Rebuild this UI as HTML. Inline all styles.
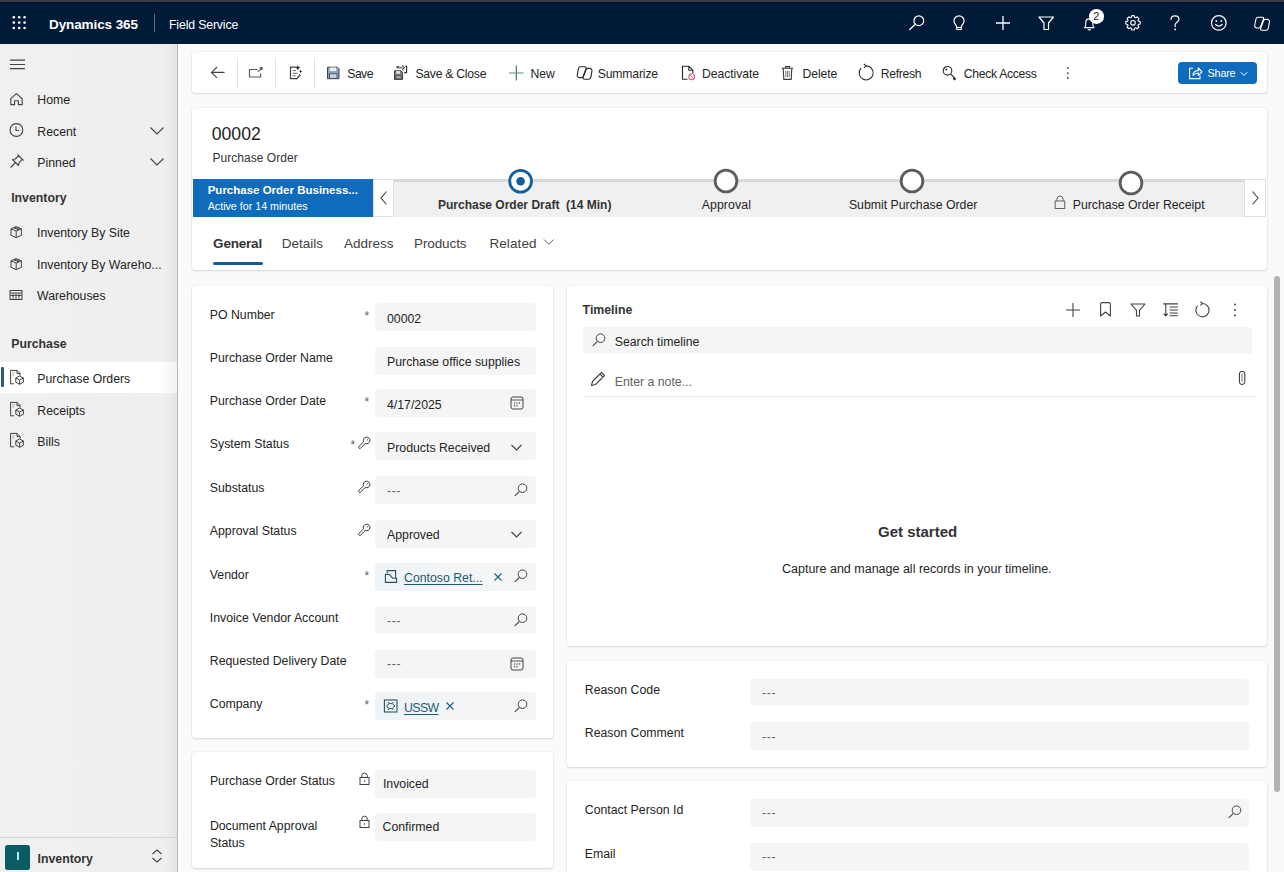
<!DOCTYPE html><html><head><meta charset="utf-8"><style>
html,body{margin:0;padding:0;}
body{width:1284px;height:872px;overflow:hidden;position:relative;background:#fafafa;font-family:"Liberation Sans", sans-serif;}
.t{position:absolute;line-height:1;white-space:nowrap;}
.card{position:absolute;background:#fff;border-radius:3px;box-shadow:0 0 1.5px rgba(0,0,0,.14),0 1px 2px rgba(0,0,0,.12);}
svg{overflow:visible}
</style></head><body><div style="position:absolute;left:0px;top:0px;width:1284px;height:2px;background:#373b4b"></div>
<div style="position:absolute;left:0px;top:2px;width:1284px;height:42px;background:#001a38"></div>
<div style="position:absolute;left:0px;top:2px;width:1284px;height:1px;background:#0a1428"></div>
<svg style="position:absolute;left:0;top:0" width="40" height="44"><circle cx="13.8" cy="17.2" r="1.3" fill="#fff"/><circle cx="13.8" cy="22.6" r="1.3" fill="#fff"/><circle cx="13.8" cy="28.0" r="1.3" fill="#fff"/><circle cx="19.2" cy="17.2" r="1.3" fill="#fff"/><circle cx="19.2" cy="22.6" r="1.3" fill="#fff"/><circle cx="19.2" cy="28.0" r="1.3" fill="#fff"/><circle cx="24.6" cy="17.2" r="1.3" fill="#fff"/><circle cx="24.6" cy="22.6" r="1.3" fill="#fff"/><circle cx="24.6" cy="28.0" r="1.3" fill="#fff"/></svg>
<div class="t" style="left:49px;top:17.87px;font-size:13.5px;font-weight:700;color:#fff;letter-spacing:-0.1px">Dynamics 365</div>
<div style="position:absolute;left:154px;top:14px;width:1px;height:18px;background:#5a6a8a"></div>
<div class="t" style="left:169px;top:18.89px;font-size:12.3px;font-weight:400;color:#fff;letter-spacing:-0.15px">Field Service</div>
<svg style="position:absolute;left:905px;top:10px;" width="26" height="26" viewBox="0 0 26 26" fill="none"><circle cx="13.8" cy="10.7" r="4.9" stroke="#fff" stroke-width="1.2"/><path d="M10.3 14.2 L4.7 19.5" stroke="#fff" stroke-width="1.3" stroke-linecap="round"/></svg>
<svg style="position:absolute;left:946px;top:10px;transform:translate(-2px,0)" width="26" height="26" viewBox="0 0 26 26" fill="none"><path d="M12.8 19.5 v-2.2 c0-1.2-0.6-2-1.4-3 a5 5 0 1 1 7.2 0 c-0.8 1-1.4 1.8-1.4 3 v2.2 z" stroke="#fff" stroke-width="1.2"/><path d="M13 17.5 h4" stroke="#fff" stroke-width="1.1"/></svg>
<svg style="position:absolute;left:990px;top:10px;" width="26" height="26" viewBox="0 0 26 26" fill="none"><path d="M13 6 v14 M6 13 h14" stroke="#fff" stroke-width="1.3"/></svg>
<svg style="position:absolute;left:1033px;top:10px;" width="26" height="26" viewBox="0 0 26 26" fill="none"><path d="M6 7 h14.5 l-5 6 v6.5 h-4.5 v-6.5 z" stroke="#fff" stroke-width="1.2" stroke-linejoin="round"/></svg>
<svg style="position:absolute;left:1076px;top:10px;" width="26" height="26" viewBox="0 0 26 26" fill="none"><path d="M8.6 17.6 c0.9-0.9 1.2-2 1.2-3.6 v-1.6 a3.5 3.5 0 0 1 7 0 v1.6 c0 1.6 0.3 2.7 1.2 3.6 z" stroke="#fff" stroke-width="1.1" stroke-linejoin="round"/><path d="M12 19 a1.4 1.4 0 0 0 2.6 0" stroke="#fff" stroke-width="1.1"/></svg>
<div style="position:absolute;left:1089.3px;top:9.1px;width:14.6px;height:14.6px;border-radius:50%;background:#fff;"></div>
<div class="t" style="left:1093.3px;top:10.59px;font-size:11px;font-weight:400;color:#2a1a1a;">2</div>
<svg style="position:absolute;left:1119.5px;top:10px;" width="26" height="26" viewBox="0 0 26 26" fill="none"><path d="M11.35 7.45 L11.76 5.61 L14.24 5.61 L14.65 7.45 L15.61 7.85 L17.21 6.84 L18.96 8.59 L17.95 10.19 L18.35 11.15 L20.19 11.56 L20.19 14.04 L18.35 14.45 L17.95 15.41 L18.96 17.01 L17.21 18.76 L15.61 17.75 L14.65 18.15 L14.24 19.99 L11.76 19.99 L11.35 18.15 L10.39 17.75 L8.79 18.76 L7.04 17.01 L8.05 15.41 L7.65 14.45 L5.81 14.04 L5.81 11.56 L7.65 11.15 L8.05 10.19 L7.04 8.59 L8.79 6.84 L10.39 7.85 Z" stroke="#fff" stroke-width="1.1" stroke-linejoin="round"/><circle cx="13" cy="12.8" r="2.3" stroke="#fff" stroke-width="1.1"/></svg>
<svg style="position:absolute;left:1165px;top:10px;" width="20" height="22" viewBox="0 0 20 22" fill="none"><path d="M6 9.5 C6 6.5 8 5.8 10 5.8 C12.2 5.8 14 7 14 9.3 C14 11.5 11.8 12.2 10.6 13.5 C10.2 14 10.1 14.6 10.1 16.6" stroke="#fff" stroke-width="1.2" stroke-linecap="round"/><circle cx="10.1" cy="19.4" r="0.9" fill="#fff"/></svg>
<svg style="position:absolute;left:1206px;top:10px;" width="26" height="26" viewBox="0 0 26 26" fill="none"><circle cx="12.8" cy="12.9" r="7.3" stroke="#fff" stroke-width="1.2"/><circle cx="10.3" cy="11" r="0.9" fill="#fff"/><circle cx="15.3" cy="11" r="0.9" fill="#fff"/><path d="M9.5 14.5 q3.3 3.2 6.6 0" stroke="#fff" stroke-width="1.2" stroke-linecap="round"/></svg>
<svg style="position:absolute;left:1249px;top:10px;" width="26" height="26" viewBox="0 0 26 26" fill="none"><path d="M8.8 7.2 H13.4 C14.4 7.2 14.9 7.9 14.6 8.8 L11.6 16.8 C11.3 17.6 10.7 18 9.9 18 H8.1 C6.3 18 5.4 16.8 5.8 15 L6.8 9.6 C7.1 8.1 7.8 7.2 8.8 7.2 Z" stroke="#fff" stroke-width="1.1"/><path d="M17.4 20.2 H12.8 C11.8 20.2 11.3 19.5 11.6 18.6 L14.6 10.6 C14.9 9.8 15.5 9.4 16.3 9.4 H18.1 C19.9 9.4 20.8 10.6 20.4 12.4 L19.4 17.8 C19.1 19.3 18.4 20.2 17.4 20.2 Z" stroke="#fff" stroke-width="1.1"/></svg>
<div style="position:absolute;left:0px;top:44px;width:177px;height:828px;background:linear-gradient(to right,#f0f0f0 0,#efefef 165px,#e3e3e3 177px)"></div>
<div style="position:absolute;left:177px;top:44px;width:1px;height:828px;background:#bababa"></div>
<div style="position:absolute;left:178px;top:44px;width:5px;height:828px;background:#fdfdfd"></div>
<svg style="position:absolute;left:9px;top:56px;" width="20" height="16" viewBox="0 0 20 16" fill="none"><path d="M1 4.1 h15 M1 8.5 h15 M1 12.6 h15" stroke="#424242" stroke-width="1.1"/></svg>
<svg style="position:absolute;left:9px;top:92px;" width="16" height="16" viewBox="0 0 16 16" fill="none"><path d="M1.8 6.6 L7.5 1.6 L13.2 6.6 V12.6 H9.4 V8.8 H5.6 V12.6 H1.8 Z" stroke="#424242" stroke-width="1.1" stroke-linejoin="round"/></svg>
<div class="t" style="left:37.3px;top:94.49px;font-size:12.3px;font-weight:400;color:#242424;">Home</div>
<svg style="position:absolute;left:9px;top:122px;" width="16" height="16" viewBox="0 0 16 16" fill="none"><circle cx="7.4" cy="8" r="6.4" stroke="#424242" stroke-width="1.1"/><path d="M7 4.5 V8.5 H10" stroke="#424242" stroke-width="1.1"/></svg>
<div class="t" style="left:37.3px;top:126.19px;font-size:12.3px;font-weight:400;color:#242424;">Recent</div>
<svg style="position:absolute;left:148px;top:124px;" width="18" height="12" viewBox="0 0 18 12" fill="none"><path d="M2.5 3.5 L9 10 L15.5 3.5" stroke="#424242" stroke-width="1.1"/></svg>
<svg style="position:absolute;left:9px;top:153px;" width="16" height="16" viewBox="0 0 16 16" fill="none"><path d="M8.5 1.5 L14.5 7.5 M10 2.5 L6.2 6 L3.5 6.5 L9.5 12.5 L10 9.8 L13.5 6 M6.5 9.5 L1.5 14.5" stroke="#424242" stroke-width="1.1" stroke-linejoin="round"/></svg>
<div class="t" style="left:37.3px;top:156.79px;font-size:12.3px;font-weight:400;color:#242424;">Pinned</div>
<svg style="position:absolute;left:148px;top:155px;" width="18" height="12" viewBox="0 0 18 12" fill="none"><path d="M2.5 3.5 L9 10 L15.5 3.5" stroke="#424242" stroke-width="1.1"/></svg>
<div class="t" style="left:11.2px;top:192.09px;font-size:12.3px;font-weight:700;color:#333;">Inventory</div>
<svg style="position:absolute;left:9.5px;top:226px;" width="13" height="13" viewBox="0 0 13 13" fill="none"><path d="M6.2 0.6 L11.4 2.8 V9.3 L6.2 11.6 L1 9.3 V2.8 Z M1 2.8 L6.2 5 L11.4 2.8 M6.2 5 V11.6 M3.6 1.7 L8.8 3.9 M4.9 1.15 L10.1 3.35" stroke="#424242" stroke-width="1" stroke-linejoin="round"/></svg>
<div class="t" style="left:37px;top:227.19px;font-size:12.3px;font-weight:400;color:#242424;">Inventory By Site</div>
<svg style="position:absolute;left:9.5px;top:258px;" width="13" height="13" viewBox="0 0 13 13" fill="none"><path d="M6.2 0.6 L11.4 2.8 V9.3 L6.2 11.6 L1 9.3 V2.8 Z M1 2.8 L6.2 5 L11.4 2.8 M6.2 5 V11.6 M3.6 1.7 L8.8 3.9 M4.9 1.15 L10.1 3.35" stroke="#424242" stroke-width="1" stroke-linejoin="round"/></svg>
<div class="t" style="left:37px;top:259.19px;font-size:12.3px;font-weight:400;color:#242424;">Inventory By Wareho...</div>
<svg style="position:absolute;left:9px;top:289px;" width="14" height="12" viewBox="0 0 14 12" fill="none"><rect x="1" y="1.5" width="12" height="9" stroke="#424242" stroke-width="1"/><path d="M1 4 h12 M1 6.5 h12 M4 4 v6.5 M7 4 v6.5 M10 4 v6.5" stroke="#424242" stroke-width="0.9"/></svg>
<div class="t" style="left:37px;top:289.79px;font-size:12.3px;font-weight:400;color:#242424;">Warehouses</div>
<div class="t" style="left:11.2px;top:338.09px;font-size:12.3px;font-weight:700;color:#333;">Purchase</div>
<div style="position:absolute;left:0px;top:362px;width:177px;height:31px;background:linear-gradient(to right,#fff 0,#fff 160px,#f2f2f2 177px)"></div>
<div style="position:absolute;left:1px;top:367px;width:3px;height:20px;background:#2a5b84;border-radius:1px"></div>
<svg style="position:absolute;left:8.6px;top:369.4px;" width="16" height="16" viewBox="0 0 16 16" fill="none"><path d="M8 1.4 H1.6 V14.8 H5.2 M8 1.4 L11.2 4.6 V6.4 M8 1.4 V4.6 H11.2" stroke="#424242" stroke-width="1" stroke-linejoin="round"/><path d="M3.4 4 H5.6 M3.4 6 H5" stroke="#9a9a9a" stroke-width="0.9"/><path d="M10.6 6.9 L14.4 9 V13.2 L10.6 15.3 L6.8 13.2 V9 Z M6.8 9 L10.6 11.1 L14.4 9 M10.6 11.1 V15.3" fill="#fff" fill-opacity="0" stroke="#424242" stroke-width="1" stroke-linejoin="round"/></svg>
<div class="t" style="left:37.3px;top:373.09px;font-size:12.3px;font-weight:400;color:#242424;">Purchase Orders</div>
<svg style="position:absolute;left:8.6px;top:401px;" width="16" height="16" viewBox="0 0 16 16" fill="none"><path d="M8 1.4 H1.6 V14.8 H5.2 M8 1.4 L11.2 4.6 V6.4 M8 1.4 V4.6 H11.2" stroke="#424242" stroke-width="1" stroke-linejoin="round"/><path d="M3.4 4 H5.6 M3.4 6 H5" stroke="#9a9a9a" stroke-width="0.9"/><path d="M10.6 6.9 L14.4 9 V13.2 L10.6 15.3 L6.8 13.2 V9 Z M6.8 9 L10.6 11.1 L14.4 9 M10.6 11.1 V15.3" fill="#fff" fill-opacity="0" stroke="#424242" stroke-width="1" stroke-linejoin="round"/></svg>
<div class="t" style="left:37.3px;top:404.89px;font-size:12.3px;font-weight:400;color:#242424;">Receipts</div>
<svg style="position:absolute;left:8.6px;top:432.4px;" width="16" height="16" viewBox="0 0 16 16" fill="none"><path d="M8 1.4 H1.6 V14.8 H5.2 M8 1.4 L11.2 4.6 V6.4 M8 1.4 V4.6 H11.2" stroke="#424242" stroke-width="1" stroke-linejoin="round"/><path d="M3.4 4 H5.6 M3.4 6 H5" stroke="#9a9a9a" stroke-width="0.9"/><path d="M10.6 6.9 L14.4 9 V13.2 L10.6 15.3 L6.8 13.2 V9 Z M6.8 9 L10.6 11.1 L14.4 9 M10.6 11.1 V15.3" fill="#fff" fill-opacity="0" stroke="#424242" stroke-width="1" stroke-linejoin="round"/></svg>
<div class="t" style="left:37.3px;top:436.09px;font-size:12.3px;font-weight:400;color:#242424;">Bills</div>
<div style="position:absolute;left:0px;top:837px;width:177px;height:1px;background:#d4d4d4"></div>
<div style="position:absolute;left:5px;top:845px;width:25px;height:25px;border-radius:2.5px;background:#0a5b65"></div>
<div style="position:absolute;left:17px;top:852px;width:2px;height:8px;background:#a6f2f5"></div>
<div class="t" style="left:37.6px;top:853.39px;font-size:12.3px;font-weight:700;color:#333;">Inventory</div>
<svg style="position:absolute;left:150px;top:848px;" width="14" height="16" viewBox="0 0 14 16" fill="none"><path d="M2.5 6 L7 2 L11.5 6 M2.5 10 L7 14 L11.5 10" stroke="#424242" stroke-width="1.1"/></svg>
<div class="card" style="left:192px;top:52px;width:1075px;height:41px"></div>
<svg style="position:absolute;left:208px;top:64px;" width="20" height="16" viewBox="0 0 20 16" fill="none"><path d="M3.6 8.4 H16.6 M9 3 L3.5 8.4 L9 13.8" stroke="#424242" stroke-width="1.1"/></svg>
<div style="position:absolute;left:237px;top:58px;width:1px;height:30px;background:#e3e3e3"></div>
<svg style="position:absolute;left:247px;top:64px;" width="18" height="16" viewBox="0 0 18 16" fill="none"><path d="M10.5 5.5 H2.5 V13 H13.6 V9.5" stroke="#5a5a5a" stroke-width="1.2"/><path d="M10.8 7.8 L14.2 4.8" stroke="#5a5a5a" stroke-width="1.1"/><path d="M12.2 3.6 L15.8 3 L15.2 6.6 Z" fill="#424242"/></svg>
<div style="position:absolute;left:275px;top:58px;width:1px;height:30px;background:#e3e3e3"></div>
<svg style="position:absolute;left:288px;top:64px;" width="18" height="17" viewBox="0 0 18 17" fill="none"><path d="M8.5 3.2 H2.5 V14.6 H9" stroke="#424242" stroke-width="1.2"/><path d="M4.6 6.6 H8 M4.6 9.3 H9.5 M4.6 11.8 H7.5" stroke="#6a6a6a" stroke-width="1"/><path d="M9.8 1 L10.6 3 L12.6 3.8 L10.6 4.6 L9.8 6.6 L9 4.6 L7 3.8 L9 3 Z" fill="#242424"/><path d="M12.6 5.6 L13.1 6.9 L14.4 7.4 L13.1 7.9 L12.6 9.2 L12.1 7.9 L10.8 7.4 L12.1 6.9 Z" fill="#242424"/><path d="M12 10 L8.8 14.4 L8.5 15 L9.2 14.8 L12.6 11" stroke="#424242" stroke-width="1"/></svg>
<div style="position:absolute;left:314px;top:58px;width:1px;height:30px;background:#e3e3e3"></div>
<svg style="position:absolute;left:325px;top:65px;" width="16" height="15" viewBox="0 0 16 15" fill="none"><path d="M2.5 2.2 H12.5 L14 3.7 V13.7 H2.5 Z" fill="#8ea4ba" stroke="#3a4654" stroke-width="1"/><rect x="4.8" y="2.5" width="6.4" height="3.6" fill="#e6f0f6"/><rect x="4.5" y="8.8" width="7.5" height="4.5" fill="#c9d6e2" stroke="#3a4654" stroke-width="0.8"/></svg>
<div class="t" style="left:347.3px;top:68.37px;font-size:12.2px;font-weight:400;color:#242424;letter-spacing:-0.55px">Save</div>
<svg style="position:absolute;left:392px;top:64px;" width="18" height="17" viewBox="0 0 18 17" fill="none"><path d="M2.5 6.8 H9 L10.6 8.4 V15.4 H2.5 Z" fill="#7c7c7c" stroke="#3d3d3d" stroke-width="1"/><rect x="4.3" y="7.1" width="3.6" height="2.6" fill="#e8e8e8"/><rect x="4" y="11.6" width="5" height="3.3" fill="#a8a8a8" stroke="#3d3d3d" stroke-width="0.6"/><path d="M4.2 3.6 H10.5" stroke="#6f8a80" stroke-width="1.8"/><path d="M4.6 2.6 H7" stroke="#2b2b2b" stroke-width="0.9"/><path d="M10 1.4 L12.4 3.7 L10 6" stroke="#555" stroke-width="1.1"/><path d="M13.2 2.2 H14.6 V8.6 H12.2" stroke="#2b2b2b" stroke-width="1.1"/></svg>
<div class="t" style="left:415.4px;top:68.37px;font-size:12.2px;font-weight:400;color:#242424;letter-spacing:-0.25px">Save &amp; Close</div>
<svg style="position:absolute;left:507px;top:64px;" width="18" height="18" viewBox="0 0 18 18" fill="none"><path d="M9.3 1.5 V16.5" stroke="#2f6e63" stroke-width="1.1"/><path d="M2 9 H16.5" stroke="#6b8f88" stroke-width="1.1"/></svg>
<div class="t" style="left:530.4px;top:68.37px;font-size:12.2px;font-weight:400;color:#242424;">New</div>
<svg style="position:absolute;left:575px;top:64px;" width="18" height="17" viewBox="0 0 18 17" fill="none"><path d="M5.3 2.8 H9.9 C10.9 2.8 11.4 3.5 11.1 4.4 L8.1 12.4 C7.8 13.2 7.2 13.6 6.4 13.6 H4.6 C2.8 13.6 1.9 12.4 2.3 10.6 L3.3 5.2 C3.6 3.7 4.3 2.8 5.3 2.8 Z" stroke="#242424" stroke-width="1.1"/><path d="M13.9 15.2 H9.3 C8.3 15.2 7.8 14.5 8.1 13.6 L11.1 5.6 C11.4 4.8 12 4.4 12.8 4.4 H14.6 C16.4 4.4 17.3 5.6 16.9 7.4 L15.9 12.8 C15.6 14.3 14.9 15.2 13.9 15.2 Z" stroke="#242424" stroke-width="1.1"/></svg>
<div class="t" style="left:597.7px;top:68.37px;font-size:12.2px;font-weight:400;color:#242424;letter-spacing:-0.15px">Summarize</div>
<svg style="position:absolute;left:680px;top:64px;" width="18" height="17" viewBox="0 0 18 17" fill="none"><path d="M8.8 2.2 H2.5 V15.3 H7.5 M8.8 2.2 L12.8 6.2 V9 M8.8 2.2 V6.2 H12.8" stroke="#2b2b2b" stroke-width="1.1"/><circle cx="11.7" cy="12.7" r="2.9" fill="#fff" stroke="#d5607a" stroke-width="1.1"/><path d="M9.8 10.8 L13.6 14.6" stroke="#d5607a" stroke-width="1"/></svg>
<div class="t" style="left:702px;top:68.37px;font-size:12.2px;font-weight:400;color:#242424;letter-spacing:-0.05px">Deactivate</div>
<svg style="position:absolute;left:779px;top:64px;" width="18" height="17" viewBox="0 0 18 17" fill="none"><path d="M2.8 4.2 H14.2 M6.5 4.2 V2.6 H10.5 V4.2 M4.2 4.2 L4.8 15.4 H12.2 L12.8 4.2" stroke="#3a3a3a" stroke-width="1.1"/><path d="M6.8 6.8 V13 M8.5 6.8 V13 M10.2 6.8 V13" stroke="#6a6a6a" stroke-width="0.9"/></svg>
<div class="t" style="left:802.5px;top:68.37px;font-size:12.2px;font-weight:400;color:#242424;letter-spacing:-0.1px">Delete</div>
<svg style="position:absolute;left:857px;top:64px;" width="18" height="18" viewBox="0 0 18 18" fill="none"><path d="M9.1 1.9 A7 7 0 1 1 4.1 4.1" stroke="#2b2b2b" stroke-width="1.1"/><path d="M6.9 0 L9.2 1.9 L6.9 3.9" stroke="#2b2b2b" stroke-width="1.1"/></svg>
<div class="t" style="left:880.7px;top:68.37px;font-size:12.2px;font-weight:400;color:#242424;letter-spacing:-0.3px">Refresh</div>
<svg style="position:absolute;left:941px;top:64px;" width="18" height="18" viewBox="0 0 18 18" fill="none"><circle cx="6.5" cy="6.8" r="4.3" stroke="#2b2b2b" stroke-width="1.1"/><circle cx="5.2" cy="5.6" r="1" fill="#2b2b2b"/><path d="M9.5 9.8 L14.5 14.8 L13.6 15.8 L12.2 14.5 M13.2 13.5 L12 14.6" stroke="#2b2b2b" stroke-width="1.1"/></svg>
<div class="t" style="left:963.7px;top:68.37px;font-size:12.2px;font-weight:400;color:#242424;letter-spacing:-0.3px">Check Access</div>
<svg style="position:absolute;left:1064px;top:64px;" width="8" height="18" viewBox="0 0 8 18" fill="none"><circle cx="3.8" cy="3.9" r="0.95" fill="#424242"/><circle cx="3.8" cy="9.1" r="0.95" fill="#424242"/><circle cx="3.8" cy="14" r="0.95" fill="#424242"/></svg>
<div style="position:absolute;left:1178px;top:62px;width:79px;height:21.5px;border-radius:4px;background:#0f6cbd"></div>
<svg style="position:absolute;left:1187px;top:65px;" width="16" height="16" viewBox="0 0 16 16" fill="none"><path d="M6 3.2 H2.6 V13.6 H13 V10.5" stroke="#fff" stroke-width="1.1"/><path d="M6 10.5 C6 6.8 8.3 5.6 11.3 5.6 V3 L15 6.8 L11.3 10.4 V8 C9.2 8 7.4 8.6 6 10.5 Z" stroke="#fff" stroke-width="1.1" stroke-linejoin="round"/></svg>
<div class="t" style="left:1207.6px;top:68.36px;font-size:10.8px;font-weight:400;color:#fff;letter-spacing:-0.2px">Share</div>
<svg style="position:absolute;left:1239px;top:69.7px;" width="10" height="8" viewBox="0 0 10 8" fill="none"><path d="M1.8 2.2 L5 5.4 L8.2 2.2" stroke="#fff" stroke-width="1"/></svg>
<div class="card" style="left:192px;top:108px;width:1075px;height:162px"></div>
<div class="t" style="left:211.7px;top:125.72px;font-size:17.7px;font-weight:400;color:#242424;">00002</div>
<div class="t" style="left:212.4px;top:151.54px;font-size:12px;font-weight:400;color:#333;letter-spacing:0.05px">Purchase Order</div>
<div style="position:absolute;left:394px;top:179px;width:850px;height:38px;background:#f0f0f0"></div>
<div style="position:absolute;left:394px;top:179px;width:850px;height:3px;background:#d9d9d9"></div>
<div style="position:absolute;left:193px;top:179px;width:180px;height:38px;background:#0f6cbd"></div>
<div class="t" style="left:207.7px;top:185.27px;font-size:11.5px;font-weight:700;color:#fff;">Purchase Order Business...</div>
<div class="t" style="left:207.7px;top:200.64px;font-size:10.7px;font-weight:400;color:#fff;">Active for 14 minutes</div>
<div style="position:absolute;left:373px;top:179px;width:21px;height:38px;background:#fff;box-sizing:border-box;border:1px solid #e0e0e0"></div>
<svg style="position:absolute;left:378px;top:190px;" width="12" height="16" viewBox="0 0 12 16" fill="none"><path d="M8.5 1.5 L3 8 L8.5 14.5" stroke="#424242" stroke-width="1.1"/></svg>
<div style="position:absolute;left:1244px;top:179px;width:22px;height:38px;background:#fff;box-sizing:border-box;border:1px solid #e0e0e0"></div>
<svg style="position:absolute;left:1249px;top:190px;" width="12" height="16" viewBox="0 0 12 16" fill="none"><path d="M3.5 1.5 L9 8 L3.5 14.5" stroke="#424242" stroke-width="1.1"/></svg>
<svg style="position:absolute;left:507px;top:168px;" width="28" height="28" viewBox="0 0 28 28" fill="none"><circle cx="13.6" cy="13.3" r="10.9" fill="#fff" stroke="#0f5f9f" stroke-width="2.8"/><circle cx="13.6" cy="13.3" r="4.3" fill="#0f5f9f"/></svg>
<div class="t" style="left:438px;top:199.44px;font-size:12px;font-weight:700;color:#333;">Purchase Order Draft&nbsp; (14 Min)</div>
<svg style="position:absolute;left:712.2px;top:167.4px;" width="28" height="28" viewBox="0 0 28 28" fill="none"><circle cx="14" cy="14" r="10.9" fill="#fff" stroke="#5c5c5c" stroke-width="2.8"/></svg>
<svg style="position:absolute;left:898.4px;top:167.4px;" width="28" height="28" viewBox="0 0 28 28" fill="none"><circle cx="14" cy="14" r="10.9" fill="#fff" stroke="#5c5c5c" stroke-width="2.8"/></svg>
<svg style="position:absolute;left:1116.8px;top:169px;" width="28" height="28" viewBox="0 0 28 28" fill="none"><circle cx="14" cy="14" r="10.9" fill="#fff" stroke="#5c5c5c" stroke-width="2.8"/></svg>
<div class="t" style="left:701.7px;top:199.39px;font-size:12.3px;font-weight:400;color:#242424;letter-spacing:0.1px">Approval</div>
<div class="t" style="left:848.9px;top:199.39px;font-size:12.3px;font-weight:400;color:#242424;">Submit Purchase Order</div>
<svg style="position:absolute;left:1054px;top:195px;" width="12" height="15" viewBox="0 0 12 15" fill="none"><rect x="1.2" y="6" width="9.5" height="7.5" stroke="#616161" stroke-width="1"/><path d="M3 6 V4 a3 3 0 0 1 6 0 V6" stroke="#616161" stroke-width="1"/></svg>
<div class="t" style="left:1072.7px;top:199.39px;font-size:12.3px;font-weight:400;color:#242424;">Purchase Order Receipt</div>
<div class="t" style="left:213.1px;top:237.27px;font-size:13.5px;font-weight:700;color:#333;letter-spacing:-0.2px">General</div>
<div style="position:absolute;left:213px;top:262px;width:50px;height:3px;background:#115ea3;border-radius:2px"></div>
<div class="t" style="left:281.7px;top:237.27px;font-size:13.5px;font-weight:400;color:#424242;">Details</div>
<div class="t" style="left:344px;top:237.27px;font-size:13.5px;font-weight:400;color:#424242;">Address</div>
<div class="t" style="left:414px;top:237.27px;font-size:13.5px;font-weight:400;color:#424242;letter-spacing:-0.1px">Products</div>
<div class="t" style="left:489.4px;top:237.27px;font-size:13.5px;font-weight:400;color:#424242;letter-spacing:0.1px">Related</div>
<svg style="position:absolute;left:542px;top:237px;" width="14" height="10" viewBox="0 0 14 10" fill="none"><path d="M2 2.5 L6.8 7.3 L11.6 2.5" stroke="#616161" stroke-width="1"/></svg>
<div class="card" style="left:192px;top:286px;width:361px;height:452px"></div>
<div class="t" style="left:209.8px;top:309.29px;font-size:12.3px;font-weight:400;color:#242424;">PO Number</div>
<div class="t" style="left:364.5px;top:310.04px;font-size:12px;font-weight:400;color:#616161;">*</div>
<div style="position:absolute;left:375px;top:303px;width:161px;height:28px;background:#f5f5f5;border-radius:4px"></div>
<div class="t" style="left:387px;top:312.99px;font-size:12.3px;font-weight:400;color:#242424;">00002</div>
<div class="t" style="left:209.8px;top:352.49px;font-size:12.3px;font-weight:400;color:#242424;">Purchase Order Name</div>
<div style="position:absolute;left:375px;top:347px;width:161px;height:28px;background:#f5f5f5;border-radius:4px"></div>
<div class="t" style="left:387px;top:356.19px;font-size:12.3px;font-weight:400;color:#242424;">Purchase office supplies</div>
<div class="t" style="left:209.8px;top:394.89px;font-size:12.3px;font-weight:400;color:#242424;">Purchase Order Date</div>
<div class="t" style="left:364.5px;top:395.64px;font-size:12px;font-weight:400;color:#616161;">*</div>
<div style="position:absolute;left:375px;top:389px;width:161px;height:28px;background:#f5f5f5;border-radius:4px"></div>
<div class="t" style="left:387px;top:398.59px;font-size:12.3px;font-weight:400;color:#242424;">4/17/2025</div>
<svg style="position:absolute;left:510px;top:396px;" width="14" height="14" viewBox="0 0 14 14" fill="none"><rect x="1" y="1" width="12" height="12" rx="2" stroke="#424242" stroke-width="1"/><path d="M1 4 H13" stroke="#424242" stroke-width="0.9"/><circle cx="4.5" cy="7" r="0.7" fill="#424242"/><circle cx="7" cy="7" r="0.7" fill="#424242"/><circle cx="9.5" cy="7" r="0.7" fill="#424242"/><circle cx="4.5" cy="9.8" r="0.7" fill="#424242"/><circle cx="7" cy="9.8" r="0.7" fill="#424242"/></svg>
<div class="t" style="left:209.8px;top:438.39px;font-size:12.3px;font-weight:400;color:#242424;">System Status</div>
<div class="t" style="left:350.5px;top:439.14px;font-size:12px;font-weight:400;color:#616161;">*</div>
<svg style="position:absolute;left:357px;top:437.0px;" width="14" height="14" viewBox="0 0 14 14" fill="none"><path d="M1.86 9.45 L6.59 4.79 A3.3 3.3 0 1 1 8.27 6.49 L3.54 11.15 A1.2 1.2 0 0 1 1.86 9.45 Z" stroke="#2b2b2b" stroke-width="0.95" stroke-linejoin="round"/><circle cx="10.3" cy="2.8" r="0.6" fill="#2b2b2b"/></svg>
<div style="position:absolute;left:375px;top:432px;width:161px;height:28px;background:#f5f5f5;border-radius:4px"></div>
<div class="t" style="left:387px;top:442.09px;font-size:12.3px;font-weight:400;color:#242424;">Products Received</div>
<svg style="position:absolute;left:510px;top:442.5px;" width="14" height="10" viewBox="0 0 14 10" fill="none"><path d="M1.5 2 L6.5 7 L11.5 2" stroke="#424242" stroke-width="1.1"/></svg>
<div class="t" style="left:209.8px;top:482.09px;font-size:12.3px;font-weight:400;color:#242424;">Substatus</div>
<svg style="position:absolute;left:357px;top:480.7px;" width="14" height="14" viewBox="0 0 14 14" fill="none"><path d="M1.86 9.45 L6.59 4.79 A3.3 3.3 0 1 1 8.27 6.49 L3.54 11.15 A1.2 1.2 0 0 1 1.86 9.45 Z" stroke="#2b2b2b" stroke-width="0.95" stroke-linejoin="round"/><circle cx="10.3" cy="2.8" r="0.6" fill="#2b2b2b"/></svg>
<div style="position:absolute;left:375px;top:476px;width:161px;height:28px;background:#f5f5f5;border-radius:4px"></div>
<div class="t" style="left:387px;top:484.89px;font-size:12.3px;font-weight:400;color:#616161;letter-spacing:0.6px">---</div>
<svg style="position:absolute;left:513px;top:481.7px;" width="16" height="16" viewBox="0 0 16 16" fill="none"><circle cx="9.5" cy="6.2" r="4.3" stroke="#424242" stroke-width="1"/><path d="M6.4 9.3 L1.8 13.9" stroke="#424242" stroke-width="1.1"/></svg>
<div class="t" style="left:209.8px;top:525.49px;font-size:12.3px;font-weight:400;color:#242424;">Approval Status</div>
<svg style="position:absolute;left:357px;top:524.1px;" width="14" height="14" viewBox="0 0 14 14" fill="none"><path d="M1.86 9.45 L6.59 4.79 A3.3 3.3 0 1 1 8.27 6.49 L3.54 11.15 A1.2 1.2 0 0 1 1.86 9.45 Z" stroke="#2b2b2b" stroke-width="0.95" stroke-linejoin="round"/><circle cx="10.3" cy="2.8" r="0.6" fill="#2b2b2b"/></svg>
<div style="position:absolute;left:375px;top:520px;width:161px;height:28px;background:#f5f5f5;border-radius:4px"></div>
<div class="t" style="left:387px;top:529.19px;font-size:12.3px;font-weight:400;color:#242424;">Approved</div>
<svg style="position:absolute;left:510px;top:529.6px;" width="14" height="10" viewBox="0 0 14 10" fill="none"><path d="M1.5 2 L6.5 7 L11.5 2" stroke="#424242" stroke-width="1.1"/></svg>
<div class="t" style="left:209.8px;top:568.79px;font-size:12.3px;font-weight:400;color:#242424;">Vendor</div>
<div class="t" style="left:364.5px;top:569.54px;font-size:12px;font-weight:400;color:#616161;">*</div>
<div style="position:absolute;left:375px;top:563px;width:161px;height:28px;background:#f5f5f5;border-radius:4px"></div>
<div style="position:absolute;left:375px;top:563px;width:161px;height:28px;background:linear-gradient(to right,#eef3f7,#f4f5f6 60%,#f5f5f5);border-radius:4px"></div>
<svg style="position:absolute;left:382px;top:568.9px;" width="16" height="16" viewBox="0 0 16 16" fill="none"><path d="M5.2 4.2 V1.6 H13.6 V9.2" stroke="#2a5260" stroke-width="1.1"/><path d="M3.4 5.4 H7.2 L10.8 9.3 H14.6 V13.4 H3.4 Z" stroke="#2a5260" stroke-width="1.1" stroke-linejoin="round"/></svg>
<div class="t" style="left:404px;top:572.49px;font-size:12.3px;font-weight:400;color:#1b5c74;text-decoration:underline;text-underline-offset:1.5px">Contoso Ret...</div>
<svg style="position:absolute;left:492px;top:570.9px;" width="12" height="12" viewBox="0 0 12 12" fill="none"><path d="M2.5 2.5 L9.5 9.5 M9.5 2.5 L2.5 9.5" stroke="#1b5c74" stroke-width="1.1"/></svg>
<svg style="position:absolute;left:513px;top:568.4px;" width="16" height="16" viewBox="0 0 16 16" fill="none"><circle cx="9.5" cy="6.2" r="4.3" stroke="#424242" stroke-width="1"/><path d="M6.4 9.3 L1.8 13.9" stroke="#424242" stroke-width="1.1"/></svg>
<div class="t" style="left:209.8px;top:612.19px;font-size:12.3px;font-weight:400;color:#242424;">Invoice Vendor Account</div>
<div style="position:absolute;left:375px;top:606px;width:161px;height:28px;background:#f5f5f5;border-radius:4px"></div>
<div class="t" style="left:387px;top:614.99px;font-size:12.3px;font-weight:400;color:#616161;letter-spacing:0.6px">---</div>
<svg style="position:absolute;left:513px;top:611.8px;" width="16" height="16" viewBox="0 0 16 16" fill="none"><circle cx="9.5" cy="6.2" r="4.3" stroke="#424242" stroke-width="1"/><path d="M6.4 9.3 L1.8 13.9" stroke="#424242" stroke-width="1.1"/></svg>
<div class="t" style="left:209.8px;top:655.49px;font-size:12.3px;font-weight:400;color:#242424;">Requested Delivery Date</div>
<div style="position:absolute;left:375px;top:650px;width:161px;height:28px;background:#f5f5f5;border-radius:4px"></div>
<div class="t" style="left:387px;top:658.29px;font-size:12.3px;font-weight:400;color:#616161;letter-spacing:0.6px">---</div>
<svg style="position:absolute;left:510px;top:656.6px;" width="14" height="14" viewBox="0 0 14 14" fill="none"><rect x="1" y="1" width="12" height="12" rx="2" stroke="#424242" stroke-width="1"/><path d="M1 4 H13" stroke="#424242" stroke-width="0.9"/><circle cx="4.5" cy="7" r="0.7" fill="#424242"/><circle cx="7" cy="7" r="0.7" fill="#424242"/><circle cx="9.5" cy="7" r="0.7" fill="#424242"/><circle cx="4.5" cy="9.8" r="0.7" fill="#424242"/><circle cx="7" cy="9.8" r="0.7" fill="#424242"/></svg>
<div class="t" style="left:209.8px;top:698.29px;font-size:12.3px;font-weight:400;color:#242424;">Company</div>
<div class="t" style="left:364.5px;top:699.04px;font-size:12px;font-weight:400;color:#616161;">*</div>
<div style="position:absolute;left:375px;top:692px;width:161px;height:28px;background:#f5f5f5;border-radius:4px"></div>
<div style="position:absolute;left:375px;top:692px;width:161px;height:28px;background:linear-gradient(to right,#eef3f7,#f4f5f6 60%,#f5f5f5);border-radius:4px"></div>
<svg style="position:absolute;left:383px;top:698.4px;" width="16" height="16" viewBox="0 0 16 16" fill="none"><rect x="1.4" y="2" width="12.6" height="12" stroke="#2a5260" stroke-width="1.1"/><path d="M5 4 L6.3 5.6 H9.1 L10.4 4 M5 12 L6.3 10.4 H9.1 L10.4 12 M3.4 8 L6.3 5.6 M3.4 8 L6.3 10.4 M12 8 L9.1 5.6 M12 8 L9.1 10.4" stroke="#2a5260" stroke-width="1"/></svg>
<div class="t" style="left:404px;top:701.99px;font-size:12.3px;font-weight:400;color:#1b5c74;letter-spacing:-0.6px;text-decoration:underline;text-underline-offset:1.5px">USSW</div>
<svg style="position:absolute;left:444px;top:700.4px;" width="12" height="12" viewBox="0 0 12 12" fill="none"><path d="M2.5 2.5 L9.5 9.5 M9.5 2.5 L2.5 9.5" stroke="#1b5c74" stroke-width="1.1"/></svg>
<svg style="position:absolute;left:513px;top:697.9px;" width="16" height="16" viewBox="0 0 16 16" fill="none"><circle cx="9.5" cy="6.2" r="4.3" stroke="#424242" stroke-width="1"/><path d="M6.4 9.3 L1.8 13.9" stroke="#424242" stroke-width="1.1"/></svg>
<div class="card" style="left:192px;top:752px;width:361px;height:116px"></div>
<div class="t" style="left:209.9px;top:775.49px;font-size:12.3px;font-weight:400;color:#242424;">Purchase Order Status</div>
<svg style="position:absolute;left:359px;top:772px;" width="12" height="14" viewBox="0 0 12 14" fill="none"><rect x="1" y="5.5" width="9" height="7" stroke="#424242" stroke-width="1"/><path d="M2.8 5.5 V3.8 a2.7 2.7 0 0 1 5.4 0 V5.5" stroke="#424242" stroke-width="1"/><circle cx="5.5" cy="9" r="0.8" fill="#424242"/></svg>
<div style="position:absolute;left:375px;top:770px;width:161px;height:28px;background:#f5f5f5;border-radius:4px"></div>
<div class="t" style="left:382.9px;top:778.49px;font-size:12.3px;font-weight:400;color:#242424;">Invoiced</div>
<div class="t" style="left:209.9px;top:819.89px;font-size:12.3px;font-weight:400;color:#242424;">Document Approval</div>
<div class="t" style="left:209.9px;top:836.89px;font-size:12.3px;font-weight:400;color:#242424;">Status</div>
<svg style="position:absolute;left:359px;top:815px;" width="12" height="14" viewBox="0 0 12 14" fill="none"><rect x="1" y="5.5" width="9" height="7" stroke="#424242" stroke-width="1"/><path d="M2.8 5.5 V3.8 a2.7 2.7 0 0 1 5.4 0 V5.5" stroke="#424242" stroke-width="1"/><circle cx="5.5" cy="9" r="0.8" fill="#424242"/></svg>
<div style="position:absolute;left:375px;top:813px;width:161px;height:28px;background:#f5f5f5;border-radius:4px"></div>
<div class="t" style="left:382.5px;top:821.09px;font-size:12.3px;font-weight:400;color:#242424;">Confirmed</div>
<div class="card" style="left:567px;top:286px;width:700px;height:360px"></div>
<div class="t" style="left:582.6px;top:304.29px;font-size:12.3px;font-weight:700;color:#333;">Timeline</div>
<svg style="position:absolute;left:1065px;top:302px;" width="16" height="16" viewBox="0 0 16 16" fill="none"><path d="M8 1 V15 M1 8 H15" stroke="#424242" stroke-width="1.1"/></svg>
<svg style="position:absolute;left:1099px;top:301px;" width="14" height="17" viewBox="0 0 14 17" fill="none"><path d="M1.6 3.2 C1.6 2.2 2.2 1.6 3.2 1.6 H9.8 C10.8 1.6 11.4 2.2 11.4 3.2 V15 L6.5 11 L1.6 15 Z" stroke="#424242" stroke-width="1.1" stroke-linejoin="round"/></svg>
<svg style="position:absolute;left:1130px;top:302px;" width="16" height="16" viewBox="0 0 16 16" fill="none"><path d="M1 2 H15 L9.5 8.3 V14 H6.5 V8.3 Z" stroke="#424242" stroke-width="1.1" stroke-linejoin="round"/></svg>
<svg style="position:absolute;left:1162px;top:302px;" width="17" height="16" viewBox="0 0 17 16" fill="none"><path d="M1.2 1.9 H15.8 M3.8 1.9 V13.8 M1.8 11.6 L3.8 13.9 L5.8 11.6 M7.6 5 H15.8 M7.6 8 H15.8 M7.6 11 H15.8 M7.6 13.8 H15.8" stroke="#424242" stroke-width="1.1"/></svg>
<svg style="position:absolute;left:1194px;top:302px;" width="17" height="17" viewBox="0 0 17 17" fill="none"><path d="M8.5 1.5 A6.6 6.6 0 1 1 3.6 3.6" stroke="#424242" stroke-width="1.1"/><path d="M6.4 -0.3 L8.6 1.5 L6.4 3.4" stroke="#424242" stroke-width="1.1"/></svg>
<svg style="position:absolute;left:1231px;top:301px;" width="8" height="17" viewBox="0 0 8 17" fill="none"><circle cx="4" cy="3.5" r="1" fill="#424242"/><circle cx="4" cy="9" r="1" fill="#424242"/><circle cx="4" cy="14.5" r="1" fill="#424242"/></svg>
<div style="position:absolute;left:583px;top:327px;width:669px;height:27px;background:#f5f5f5;border-radius:2px"></div>
<svg style="position:absolute;left:591px;top:332px;" width="16" height="16" viewBox="0 0 16 16" fill="none"><circle cx="9.5" cy="6.2" r="4.3" stroke="#424242" stroke-width="1"/><path d="M6.4 9.3 L1.8 13.9" stroke="#424242" stroke-width="1.1"/></svg>
<div class="t" style="left:614.7px;top:336.49px;font-size:12.3px;font-weight:400;color:#242424;">Search timeline</div>
<svg style="position:absolute;left:589px;top:370px;" width="18" height="18" viewBox="0 0 18 18" fill="none"><path d="M2.5 15.5 L3.5 11.5 L12.5 2.5 L15.5 5.5 L6.5 14.5 Z M11 4 L14 7" stroke="#424242" stroke-width="1.1" stroke-linejoin="round"/></svg>
<div class="t" style="left:614.7px;top:375.79px;font-size:12.3px;font-weight:400;color:#616161;">Enter a note...</div>
<svg style="position:absolute;left:1236px;top:369px;" width="12" height="18" viewBox="0 0 12 18" fill="none"><rect x="3.4" y="2.3" width="5.4" height="13.2" rx="2.7" stroke="#2b2b2b" stroke-width="1"/><path d="M6 4.6 V13" stroke="#777" stroke-width="1"/></svg>
<div style="position:absolute;left:583px;top:396px;width:673px;height:1px;background:#e6e6e6"></div>
<div class="t" style="left:878px;top:523.90px;font-size:15px;font-weight:700;color:#333;">Get started</div>
<div class="t" style="left:782px;top:562.82px;font-size:12.5px;font-weight:400;color:#242424;">Capture and manage all records in your timeline.</div>
<div class="card" style="left:567px;top:661px;width:700px;height:106px"></div>
<div class="t" style="left:584.8px;top:683.89px;font-size:12.3px;font-weight:400;color:#242424;">Reason Code</div>
<div style="position:absolute;left:750px;top:679px;width:499px;height:27px;background:#f5f5f5;border-radius:4px"></div>
<div class="t" style="left:762px;top:687.09px;font-size:12.3px;font-weight:400;color:#616161;letter-spacing:0.6px">---</div>
<div class="t" style="left:584.8px;top:727.29px;font-size:12.3px;font-weight:400;color:#242424;">Reason Comment</div>
<div style="position:absolute;left:750px;top:722px;width:499px;height:28px;background:#f5f5f5;border-radius:4px"></div>
<div class="t" style="left:762px;top:730.59px;font-size:12.3px;font-weight:400;color:#616161;letter-spacing:0.6px">---</div>
<div class="card" style="left:567px;top:781px;width:700px;height:120px"></div>
<div class="t" style="left:584.8px;top:804.49px;font-size:12.3px;font-weight:400;color:#242424;">Contact Person Id</div>
<div style="position:absolute;left:750px;top:799px;width:499px;height:28px;background:#f5f5f5;border-radius:4px"></div>
<div class="t" style="left:762px;top:806.89px;font-size:12.3px;font-weight:400;color:#616161;letter-spacing:0.6px">---</div>
<svg style="position:absolute;left:1227px;top:804px;" width="16" height="16" viewBox="0 0 16 16" fill="none"><circle cx="9.5" cy="6.2" r="4.3" stroke="#424242" stroke-width="1"/><path d="M6.4 9.3 L1.8 13.9" stroke="#424242" stroke-width="1.1"/></svg>
<div class="t" style="left:584.8px;top:848.49px;font-size:12.3px;font-weight:400;color:#242424;">Email</div>
<div style="position:absolute;left:750px;top:843px;width:499px;height:28px;background:#f5f5f5;border-radius:4px"></div>
<div class="t" style="left:762px;top:850.89px;font-size:12.3px;font-weight:400;color:#616161;letter-spacing:0.6px">---</div>
<div style="position:absolute;left:1274px;top:276px;width:6px;height:516px;background:#b3b3b3;border-radius:3px"></div></body></html>
